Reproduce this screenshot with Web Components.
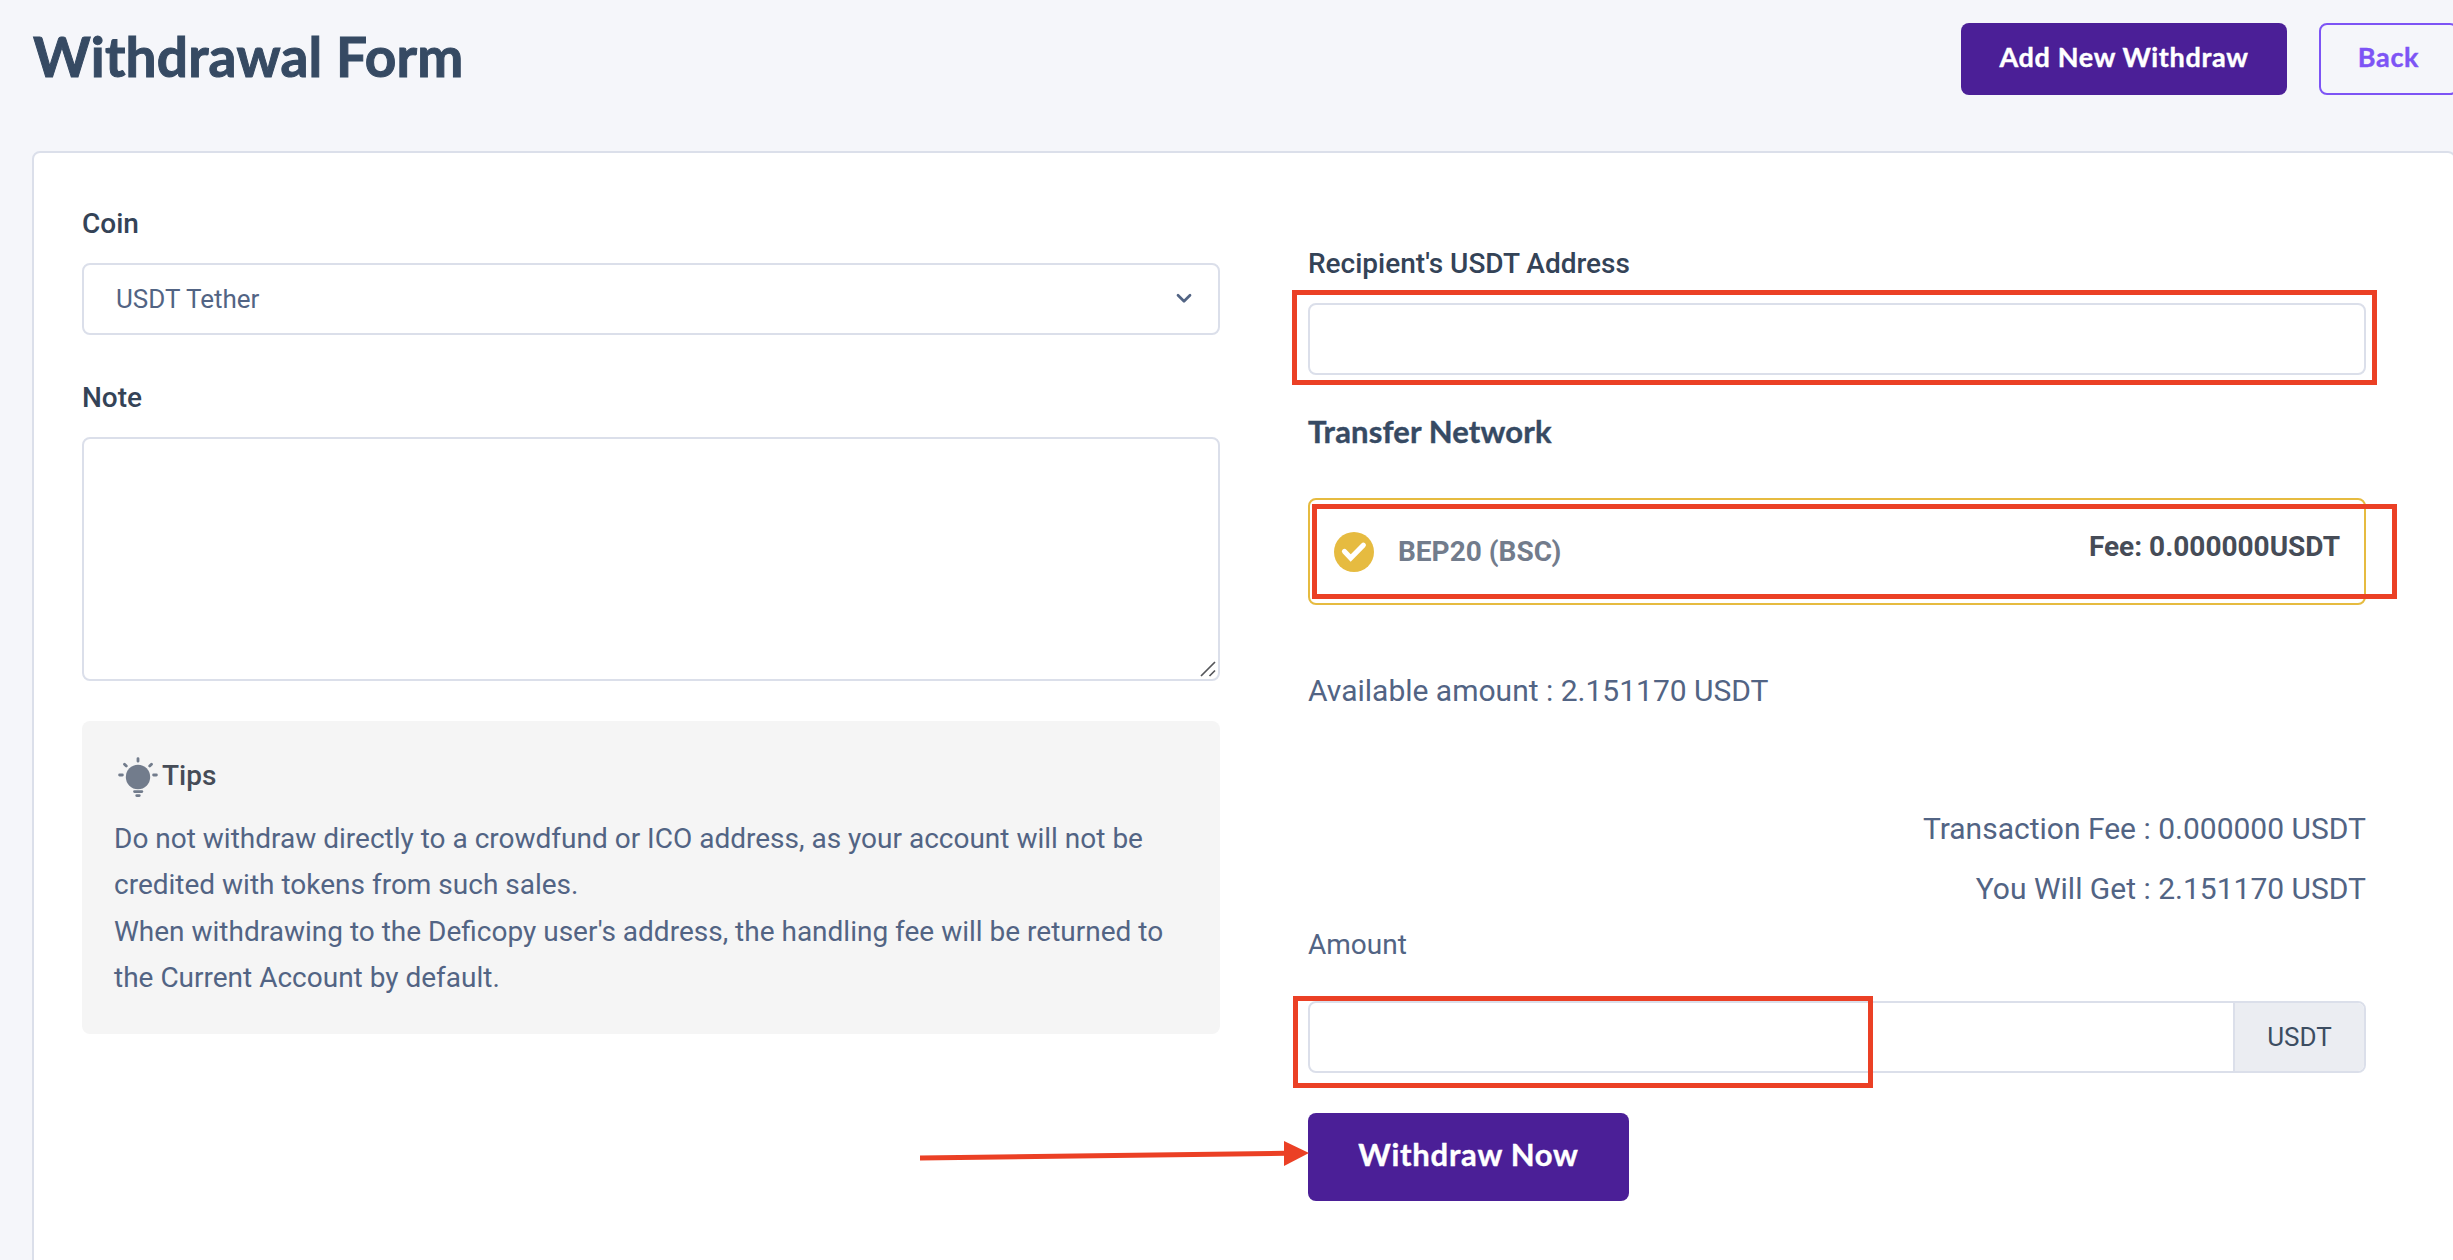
<!DOCTYPE html>
<html lang="en">
<head>
<meta charset="utf-8">
<title>Withdrawal Form</title>
<style>
html,body{margin:0;padding:0}
body{width:2453px;height:1260px;overflow:hidden;background:#f5f6fa;font-family:Roboto,sans-serif;color:#526484}
</style>
</head>
<body>
<withdraw-page></withdraw-page>
<script>
function define(name, css, html) {
  customElements.define(name, class extends HTMLElement {
    constructor() {
      super();
      this.attachShadow({ mode: 'open' }).innerHTML =
        '<style>*{box-sizing:border-box}:host{box-sizing:border-box}' + css + '</style>' + html;
    }
  });
}

define('page-title',
  ':host{display:block;font:700 55px/70px Lato,sans-serif;letter-spacing:.2px;color:#364a63;white-space:nowrap;-webkit-text-stroke:1px #364a63}',
  '<slot></slot>');

define('app-button',
  ':host{display:flex;align-items:center;justify-content:center;flex:none;height:72px;padding-bottom:4px;border-radius:8px;background:#4b1f97;color:#fff;font:700 27px/36px Lato,sans-serif;letter-spacing:.65px;white-space:nowrap;-webkit-text-stroke:.4px currentColor}' +
  ':host([outline]){background:none;border:2px solid #7d54f5;color:#7d54f5}' +
  ':host([large]){height:88px;width:321px;font-size:31px;letter-spacing:.75px;padding-bottom:6px}',
  '<slot></slot>');

define('page-header',
  ':host{display:flex;align-items:flex-start;padding:0 0 0 33px;height:151px}' +
  'page-title{flex:1;margin-top:21px}.actions{display:flex;gap:32px;padding-top:23px;flex:none;margin-right:-5px}' +
  '.add{width:326px}.back{width:139px}',
  '<page-title>Withdrawal Form</page-title><div class="actions"><app-button class="add">Add New Withdraw</app-button>' +
  '<app-button outline class="back">Back</app-button></div>');

define('field-label',
  ':host{display:block;font-size:28px;line-height:40px;font-weight:500;color:#344357;white-space:nowrap}' +
  ':host([plain]){font-weight:400;color:#526484}',
  '<slot></slot>');

define('select-box',
  ':host{display:flex;align-items:center;justify-content:space-between;height:72px;border:2px solid #dbdfea;border-radius:8px;background:#fff;padding:0 25px 0 32px;font-size:26px;line-height:36px}' +
  'svg{display:block}',
  '<slot></slot><svg width="18" height="12" viewBox="0 0 18 12"><path d="M3 2.2 9 8.2 15 2.2" fill="none" stroke="#526484" stroke-width="2.7" stroke-linecap="round" stroke-linejoin="round"/></svg>');

define('text-field',
  ':host{display:block;height:72px;border:2px solid #dbdfea;border-radius:8px;background:#fff}', '');

define('note-area',
  ':host{display:flex;justify-content:flex-end;align-items:flex-end;height:244px;border:2px solid #dbdfea;border-radius:8px;background:#fff;padding:0 1px 1px 0}svg{display:block}',
  '<svg width="18" height="18" viewBox="0 0 18 18"><path d="M2 16 16 2M10.500 16 16 10.500" fill="none" stroke="#55565a" stroke-width="1.700"/></svg>');

define('tips-box',
  ':host{display:block;height:313px;background:#f5f5f5;border-radius:8px;padding:35px 32px 0}' +
  '.head{display:flex;align-items:center;height:40px;font-size:28px;font-weight:500;line-height:40px;color:#464c57}' +
  'svg{display:block;margin:2px 4px 0}.body{margin-top:20px;font-size:28px;line-height:46.300px;white-space:nowrap}',
  '<div class="head"><svg width="40" height="40" viewBox="0 0 40 40"><circle cx="20" cy="20" r="12.200" fill="#727c8c"/>' +
  '<g stroke="#727c8c" stroke-width="2.800" stroke-linecap="round"><path d="M20 1.600V4.200M6.500 7.200 8.300 9M33.500 7.200 31.700 9M1.600 18H4.400M35.600 18H38.400M16.500 34.600H23.900M18.700 38.600H21.300"/></g></svg><span>Tips</span></div>' +
  '<div class="body">Do not withdraw directly to a crowdfund or ICO address, as your account will not be<br>credited with tokens from such sales.<br>When withdrawing to the Deficopy user\'s address, the handling fee will be returned to<br>the Current Account by default.</div>');

define('section-heading',
  ':host{display:block;font:700 31px/40px Lato,sans-serif;letter-spacing:.15px;color:#364a63;white-space:nowrap;-webkit-text-stroke:.4px #364a63}', '<slot></slot>');

define('network-option',
  ':host{display:flex;align-items:center;height:107px;border:2px solid #e6bb40;border-radius:8px;padding:0 24px;white-space:nowrap;font-weight:700;font-size:28px;line-height:40px}' +
  'svg{display:block}.name{margin-left:24px;flex:1;color:#727c8c}.fee{color:#464c57;margin-bottom:9px}',
  '<svg width="40" height="40" viewBox="0 0 40 40"><circle cx="20" cy="20" r="20" fill="#e6bb40"/><path d="M10.500 19.500 16.700 26 29.300 13.200" fill="none" stroke="#fff" stroke-width="5.200" stroke-linecap="round" stroke-linejoin="miter"/></svg>' +
  '<span class="name">BEP20 (BSC)</span><span class="fee">Fee: 0.000000USDT</span>');

define('info-line',
  ':host{display:block;font-size:30px;line-height:40px;white-space:nowrap}:host([end]){text-align:right;line-height:60px}', '<slot></slot>');

define('amount-group',
  ':host{display:flex;height:72px;border:2px solid #dbdfea;border-radius:8px;background:#fff;overflow:hidden}' +
  '.in{flex:1}.unit{width:131px;border-left:2px solid #dbdfea;background:#ebedf2;color:#3c4d62;display:flex;align-items:center;justify-content:center;font-size:26px}',
  '<div class="in"></div><div class="unit">USDT</div>');

define('form-card',
  ':host{display:flex;gap:88px;width:2424px;height:1200px;margin-left:32px;background:#fff;border:2px solid #dbdfea;border-radius:8px;padding:0 0 0 48px}' +
  '.left{width:1138px;padding-top:51px;display:flex;flex-direction:column}.right{width:1058px;padding-top:91px;display:flex;flex-direction:column}' +
  'select-box,.left note-area{margin-top:19px}.note{margin-top:43px}tips-box{margin-top:40px}' +
  'text-field{margin-top:19px}section-heading{margin-top:36px}network-option{margin-top:47px}.avail{margin-top:66px}.fee{margin-top:88px}' +
  '.amt{margin-top:6px}amount-group{margin-top:36px}.submit{margin-top:40px}',
  '<div class="left"><field-label>Coin</field-label><select-box>USDT Tether</select-box>' +
  '<field-label class="note">Note</field-label><note-area></note-area><tips-box></tips-box></div>' +
  '<div class="right"><field-label>Recipient\'s USDT Address</field-label><text-field></text-field>' +
  '<section-heading>Transfer Network</section-heading><network-option></network-option>' +
  '<info-line class="avail">Available amount : 2.151170 USDT</info-line>' +
  '<info-line end class="fee">Transaction Fee : 0.000000 USDT</info-line><info-line end>You Will Get : 2.151170 USDT</info-line>' +
  '<field-label plain class="amt">Amount</field-label><amount-group></amount-group>' +
  '<app-button large class="submit">Withdraw Now</app-button></div>');

define('annotation-layer',
  ':host{position:absolute;left:0;top:0;width:2453px;height:1260px;pointer-events:none}svg{display:block}',
  '<svg width="2453" height="1260" viewBox="0 0 2453 1260"><g fill="none" stroke="#eb4025" stroke-width="5">' +
  '<rect x="1294.500" y="292.500" width="1080" height="90"/><rect x="1314.500" y="506.500" width="1080" height="90"/><rect x="1295.500" y="998.500" width="575" height="87"/>' +
  '<path d="M920 1158 1286 1153.300"/></g><path d="M1284 1141 1309 1153 1284 1166Z" fill="#eb4025"/></svg>');

define('withdraw-page',
  ':host{display:block;position:relative;width:2453px;height:1260px;overflow:hidden}',
  '<page-header></page-header><form-card></form-card><annotation-layer></annotation-layer>');
</script>
</body>
</html>
